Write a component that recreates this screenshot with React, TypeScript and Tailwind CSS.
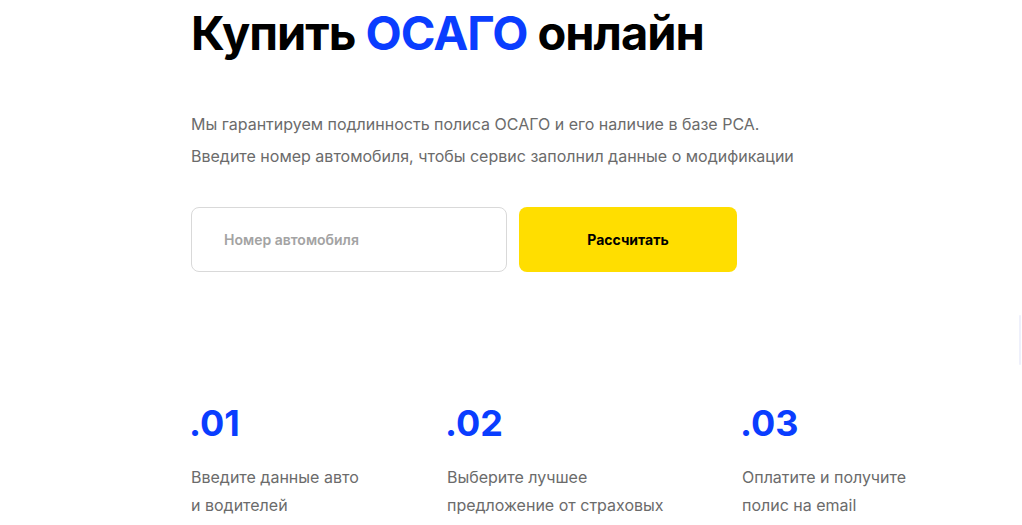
import React from 'react';

const steps = [
  { num: '.01', lines: ['Введите данные авто', 'и водителей'], w: 'w-[256px]' },
  { num: '.02', lines: ['Выберите лучшее', 'предложение от страховых'], w: 'w-[295px]' },
  { num: '.03', lines: ['Оплатите и получите', 'полис на email'], w: 'w-[280px]' },
];

const App: React.FC = () => {
  return (
    <div className="relative h-[525px] w-full overflow-hidden bg-white font-['Inter',sans-serif]">
      <div className="pl-[191px] pt-[3px]">
        <h1 className="text-[47px] font-bold leading-[60px] tracking-[-1px] text-black">
          Купить <span className="text-[#0a3dff]">ОСАГО</span> онлайн
        </h1>

        <div className="mt-[45px] text-[16px] leading-[32px] text-[#6b6b6b]">
          <p>Мы гарантируем подлинность полиса ОСАГО и его наличие в базе РСА.</p>
          <p>Введите номер автомобиля, чтобы сервис заполнил данные о модификации</p>
        </div>

        <div className="mt-[35px] flex gap-[12px]">
          <input
            type="text"
            placeholder="Номер автомобиля"
            className="h-[65px] w-[316px] rounded-[8px] border border-[#d9d9d9] px-[32px] text-[14px] font-semibold text-black outline-none placeholder:text-[#a3a3a3]"
          />
          <button
            type="button"
            className="h-[65px] w-[218px] rounded-[8px] bg-[#ffde00] text-[14px] font-bold text-black"
          >
            Рассчитать
          </button>
        </div>

        <div className="mt-[129px] flex">
          {steps.map((s) => (
            <div key={s.num} className={s.w}>
              <div className="-ml-[2px] text-[36px] font-bold leading-[44px] text-[#0a3dff]">{s.num}</div>
              <div className="mt-[18px] text-[16px] leading-[28px] text-[#6b6b6b]">
                {s.lines.map((l) => (
                  <p key={l}>{l}</p>
                ))}
              </div>
            </div>
          ))}
        </div>
      </div>
      <div className="absolute right-[1px] top-[315px] h-[50px] w-[2px] rounded bg-[#eef0fb]" />
    </div>
  );
};

export default App;
